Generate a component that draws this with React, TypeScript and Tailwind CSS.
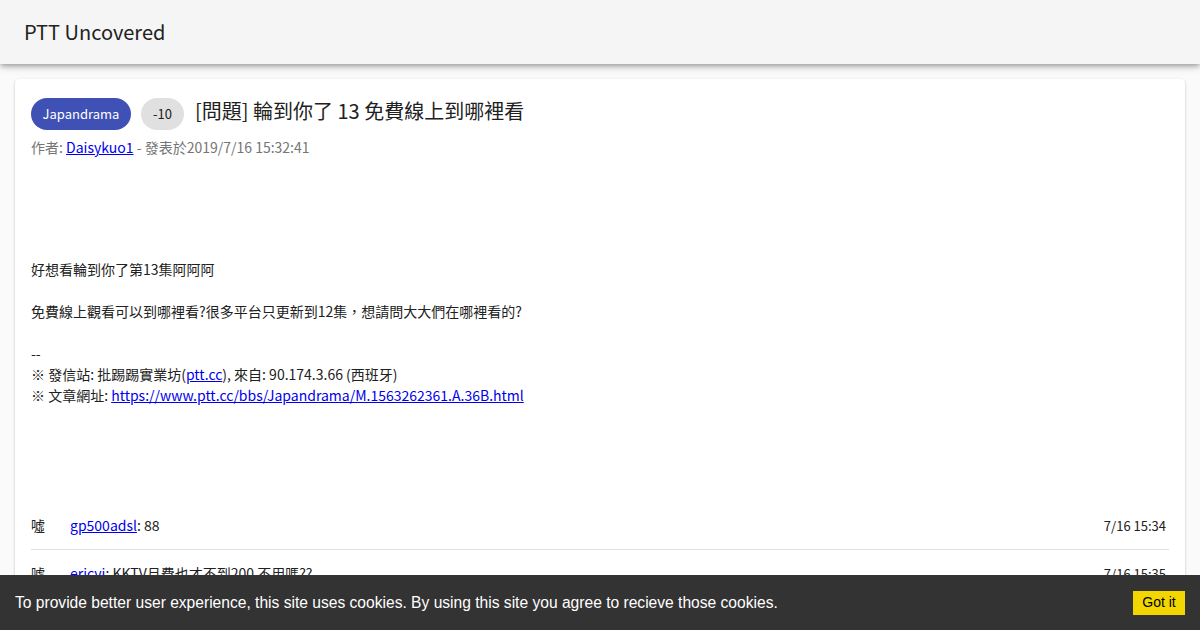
import React from "react";

const cjk = { fontFamily: '"Noto Sans CJK TC", "Noto Sans", sans-serif' };

export default function App() {
  return (
    <div className="min-h-[630px] bg-[#fafafa] relative overflow-hidden h-[630px]" style={cjk}>
      <header className="h-16 bg-[#f5f5f5] flex items-center px-6 shadow-[0_2px_4px_-1px_rgba(0,0,0,0.2),0_4px_5px_0_rgba(0,0,0,0.14),0_1px_10px_0_rgba(0,0,0,0.12)] relative z-10">
        <h1 className="text-[20px] text-[#212121] leading-none">PTT Uncovered</h1>
      </header>
      <main className="px-[15px] pt-[15px]">
        <div className="bg-white rounded-[4px] shadow-[0_1px_3px_0_rgba(0,0,0,0.2),0_1px_1px_0_rgba(0,0,0,0.14),0_2px_1px_-1px_rgba(0,0,0,0.12)] px-4 pt-[19px] pb-4">
          <div className="flex items-center h-8">
            <span className="h-8 w-[100px] rounded-full bg-[#3f51b5] text-white text-[13px] flex items-center justify-center">Japandrama</span>
            <span className="h-8 w-[43px] ml-[10px] rounded-full bg-[#e0e0e0] text-[#212121] text-[13px] flex items-center justify-center">-10</span>
            <span className="ml-[11px] mb-[6px] text-[20px] text-[#212121]">[問題] 輪到你了 13 免費線上到哪裡看</span>
          </div>
          <div className="mt-[7px] text-[14px] leading-[21px] text-[#757575]">
            作者: <a href="#" className="text-[#0000ee] underline">Daisykuo1</a> - 發表於2019/7/16 15:32:41
          </div>
          <div className="mt-[101px] text-[14px] leading-[21px] text-[#212121] whitespace-pre-wrap">
            <div>好想看輪到你了第13集阿阿阿</div>
            <div>&nbsp;</div>
            <div>免費線上觀看可以到哪裡看?很多平台只更新到12集，想請問大大們在哪裡看的?</div>
            <div>&nbsp;</div>
            <div>--</div>
            <div>※ 發信站: 批踢踢實業坊(<a href="#" className="text-[#0000ee] underline">ptt.cc</a>), 來自: 90.174.3.66 (西班牙)</div>
            <div>※ 文章網址: <a href="#" className="text-[#0000ee] underline">https://www.ptt.cc/bbs/Japandrama/M.1563262361.A.36B.html</a></div>
          </div>
          <div className="mt-[96px]">
            <div className="flex items-center h-12 border-b border-[#e0e0e0] text-[14px] text-[#212121]">
              <span className="w-[39px]">噓</span>
              <span className="flex-1"><a href="#" className="text-[#0000ee] underline">gp500adsl</a>: 88</span>
              <span className="text-[13px] pr-[3px]">7/16 15:34</span>
            </div>
            <div className="flex items-center h-12 border-b border-[#e0e0e0] text-[14px] text-[#212121]">
              <span className="w-[39px]">噓</span>
              <span className="flex-1"><a href="#" className="text-[#0000ee] underline">ericyi</a>: KKTV月費也才不到200 不用嗎??</span>
              <span className="text-[13px] pr-[3px]">7/16 15:35</span>
            </div>
          </div>
        </div>
      </main>
      <div className="absolute left-0 right-0 bottom-0 h-[55px] bg-[#333333] flex items-center justify-between px-[15px] z-20" style={{ fontFamily: '"Liberation Sans", Arial, sans-serif' }}>
        <span className="text-white text-[15.6px]">To provide better user experience, this site uses cookies. By using this site you agree to recieve those cookies.</span>
        <button className="bg-[#f1d600] text-black text-[14px] h-6 w-[52px] flex items-center justify-center">Got it</button>
      </div>
    </div>
  );
}
